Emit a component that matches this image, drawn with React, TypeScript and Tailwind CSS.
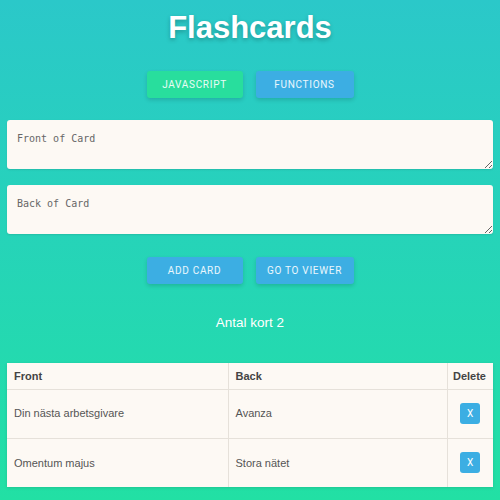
import React from "react";

const rows = [
  { front: "Din nästa arbetsgivare", back: "Avanza" },
  { front: "Omentum majus", back: "Stora nätet" },
];

const btn =
  "h-[27px] rounded-[3px] text-[10px] font-normal tracking-[0.07em] text-white/90 shadow-[0_2px_4px_rgba(0,0,0,0.15)]";

export default function App() {
  return (
    <div className="min-h-[500px] w-[500px] bg-gradient-to-b from-[#2bc8c9] to-[#22e0a4] px-[7px] font-['Liberation_Sans',Arial,sans-serif]">
      <div className="flex h-[57px] items-center justify-center">
        <h1 className="text-[31px] font-bold text-white [text-shadow:0_2px_4px_rgba(0,0,0,0.25)]">Flashcards</h1>
      </div>
      <div className="mt-[14px] flex justify-center gap-[13px] font-['Roboto',sans-serif]">
        <button className={`${btn} w-[96px] bg-[#28de9d]`}>JAVASCRIPT</button>
        <button className={`${btn} w-[98px] bg-[#3caee3]`}>FUNCTIONS</button>
      </div>
      <textarea
        placeholder="Front of Card"
        className="mt-[22px] block h-[49px] w-full rounded-[3px] bg-[#fdf9f4] px-[10px] pt-[11px] font-['DejaVu_Sans_Mono',monospace] text-[10px] text-[#555] placeholder:text-[#666] shadow-[0_1px_2px_rgba(0,0,0,0.1)] outline-none"
      />
      <textarea
        placeholder="Back of Card"
        className="mt-[16px] block h-[49px] w-full rounded-[3px] bg-[#fdf9f4] px-[10px] pt-[11px] font-['DejaVu_Sans_Mono',monospace] text-[10px] text-[#555] placeholder:text-[#666] shadow-[0_1px_2px_rgba(0,0,0,0.1)] outline-none"
      />
      <div className="mt-[23px] flex justify-center gap-[13px] font-['Roboto',sans-serif]">
        <button className={`${btn} w-[96px] bg-[#3caee3]`}>ADD CARD</button>
        <button className={`${btn} w-[98px] bg-[#3caee3]`}>GO TO VIEWER</button>
      </div>
      <div className="mt-[29px] flex h-[20px] items-center justify-center text-[13.5px] text-white">Antal kort 2</div>
      <table className="mt-[30px] w-full border-collapse bg-[#fdf9f4] text-[11px] shadow-[0_1px_3px_rgba(0,0,0,0.12)]">
        <thead>
          <tr className="h-[26px] border-b border-[#e6e1da]">
            <th className="w-[221px] border-r border-[#e6e1da] pl-[7px] text-left font-bold text-[#444]">Front</th>
            <th className="w-[219px] border-r border-[#e6e1da] pl-[7px] text-left font-bold text-[#444]">Back</th>
            <th className="pr-[7px] text-right font-bold text-[#444]">Delete</th>
          </tr>
        </thead>
        <tbody>
          {rows.map((r, i) => (
            <tr key={i} className={`h-[49px] ${i === 0 ? "border-b border-[#e6e1da]" : ""}`}>
              <td className="border-r border-[#e6e1da] pl-[7px] text-[#555]">{r.front}</td>
              <td className="border-r border-[#e6e1da] pl-[7px] text-[#555]">{r.back}</td>
              <td className="text-center">
                <button className="inline-flex h-[21px] w-[20px] items-center justify-center rounded-[3px] bg-[#3caee3] font-['Roboto',sans-serif] text-[10px] text-white">X</button>
              </td>
            </tr>
          ))}
        </tbody>
      </table>
    </div>
  );
}
